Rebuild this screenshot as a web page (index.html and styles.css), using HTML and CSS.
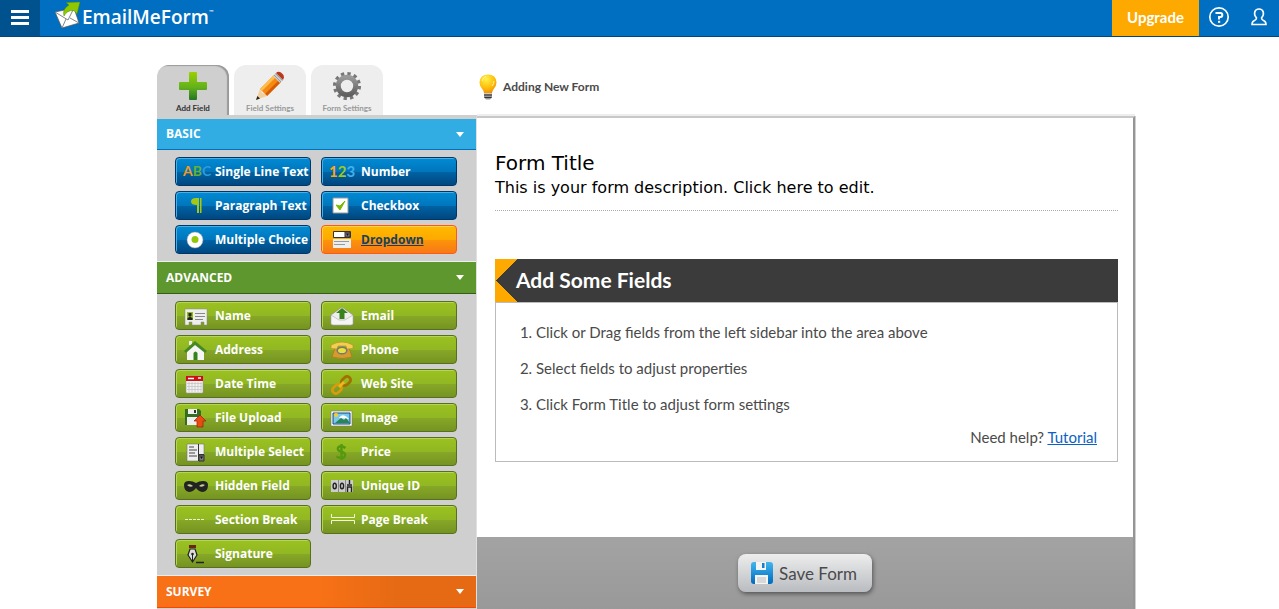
FILE: index.html
```html
<!DOCTYPE html>
<html lang="en">
<head>
    <meta charset="UTF-8">
    <meta name="viewport" content="width=device-width, initial-scale=1.0">
    <title>EmailMeForm - Form Builder</title>
    <link rel="stylesheet" href="styles.css">
</head>
<body>
    <header class="topbar">
        <button class="menu-btn" aria-label="Menu">
            <svg width="18" height="16" viewBox="0 0 18 16" fill="#fff"><path d="M0 0h18v3H0zM0 6h18v3H0zM0 12h18v3H0z"/></svg>
        </button>
        <a class="logo" href="#" aria-label="EmailMeForm">
            <svg width="28" height="30" viewBox="0 0 28 30">
                <path d="M1 12 20 8l5 15L8 28z" fill="#fff" stroke="#555" stroke-width=".7"/>
                <path d="M1 12l13 8L20 8M8 28l4-9M25 23l-9-5" fill="none" stroke="#777" stroke-width=".9"/>
                <path d="M10 16Q8 9 15 5l-3-2.500L26 2l-3 12-3-3.500q-7-.5-10 5.500z" fill="#8dc800" stroke="#4f8700" stroke-width=".5"/>
            </svg>
            <span class="logo-text">EmailMeForm</span><sup class="tm">™</sup>
        </a>
        <a class="upgrade" href="#">Upgrade</a>
        <a class="top-icon" href="#" aria-label="Help">
            <svg width="22" height="22" viewBox="0 0 22 22" fill="none" stroke="#fff">
                <circle cx="11" cy="11" r="9.200" stroke-width="1.700"/>
                <path d="M7.500 7h5q1.800 0 1.800 2t-1.800 2H11v2.500" stroke-width="2"/>
                <path d="M10 15.800h2.200" stroke-width="2"/>
            </svg>
        </a>
        <a class="top-icon" href="#" aria-label="Account">
            <svg width="18" height="20" viewBox="0 0 18 20" fill="none" stroke="#fff" stroke-width="1.600">
                <path d="M6.500 11C3 7 4.500 2 9 2s6 5 2.500 9q0 1.500 2 2.500 2.500 1 2.500 4H2q0-3 2.500-4 2-1 2-2.500z"/>
            </svg>
        </a>
    </header>

    <div class="builder">
        <div class="sidebar">
            <nav class="tabs">
                <button class="tab active">
                    <svg width="30" height="30" viewBox="0 0 30 30">
                        <defs><linearGradient id="plus" x2="0" y2="1"><stop offset="0" stop-color="#9bd000"/><stop offset=".55" stop-color="#62b11c"/><stop offset="1" stop-color="#267522"/></linearGradient></defs>
                        <path d="M12 1h6q1 0 1 1v9h9q1 0 1 1v6q0 1-1 1h-9v9q0 1-1 1h-6q-1 0-1-1v-9H2q-1 0-1-1v-6q0-1 1-1h9V2q0-1 1-1z" fill="url(#plus)"/>
                    </svg>
                    <span>Add Field</span>
                </button>
                <button class="tab">
                    <svg width="30" height="30" viewBox="0 0 30 30">
                        <path d="M5 18 19 4l7 7-14 14z" fill="#f58a12"/>
                        <path d="M5 18 19 4l2 2L7 20z" fill="#ffbd4d"/>
                        <path d="M10 23 24 9l2 2-14 14z" fill="#d65b05"/>
                        <path d="M5 18 1 29l11-4-2-2-3-1z" fill="#f3cf9e"/>
                        <path d="M2.400 25 1 29l4-1.500z" fill="#222"/>
                        <path d="M18 5l3-3 7 7-3 3z" fill="#ccc"/>
                        <path d="M19 4l7 7M20.500 2.500l7 7" stroke="#888" stroke-width=".7"/>
                        <path d="M21 2q2-2 5-.5 3 2 3 5L28 9z" fill="#b8381b"/>
                    </svg>
                    <span>Field Settings</span>
                </button>
                <button class="tab">
                    <svg width="30" height="30" viewBox="0 0 30 30">
                        <defs><linearGradient id="gear" x2="0" y2="1"><stop offset="0" stop-color="#999"/><stop offset="1" stop-color="#606060"/></linearGradient></defs>
                        <g fill="none" stroke="#777">
                            <circle cx="15" cy="15" r="12.300" stroke="#777" stroke-width="3.500" stroke-dasharray="3.300 3.140"/>
                            <circle cx="15" cy="15" r="8.700" stroke="url(#gear)" stroke-width="5"/>
                        </g>
                    </svg>
                    <span>Form Settings</span>
                </button>
            </nav>

            <div class="panel">
                <section class="basic">
                    <button class="section-head">BASIC <i class="arrow"></i></button>
                    <div class="fields">
                        <button class="field"><svg class="icon" viewBox="0 0 26 27"><text class="glyphs" x="0" y="18"><tspan fill="#f29a1f">A</tspan><tspan fill="#63b22f">B</tspan><tspan fill="#2c9bdd">C</tspan></text></svg>Single Line Text</button>
                        <button class="field"><svg class="icon" viewBox="0 0 26 27"><text class="glyphs digits" x="0" y="19"><tspan fill="#fba51d">1</tspan><tspan fill="#9bcb1b">2</tspan><tspan fill="#43b1ea">3</tspan></text></svg>Number</button>
                        <button class="field"><svg class="icon" viewBox="0 0 26 27"><path d="M16 6v15h-2V13q-6 0-6-3.500T13 6zM17 6h1.500v15H17z" fill="#a5c912"/></svg>Paragraph Text</button>
                        <button class="field"><svg class="icon" viewBox="0 0 26 27"><path d="M4 6h15v15H4z" fill="#fff" stroke="#999"/><path d="M7 13l4 5 5-9-5 5z" fill="#7db800" stroke="#7db800"/></svg>Checkbox</button>
                        <button class="field"><svg class="icon" viewBox="0 0 26 27"><circle cx="12" cy="14" r="8" fill="#fff" stroke="#999" stroke-width=".5"/><circle cx="12" cy="13.500" r="3.500" fill="#93c70e"/></svg>Multiple Choice</button>
                        <button class="field hot"><svg class="icon" viewBox="0 0 26 27"><path d="M4 13h18v9H4z" fill="#eee"/><path d="M4.500 5.500h17v6h-17z" fill="#fff" stroke="#333"/><path d="M16 6h5v5h-5z" fill="#777" stroke="#333"/><path d="M17 7.500h3l-1.500 2.500z" fill="#111"/><path d="M5 15.500h15M5 18.500h11" stroke="#999"/></svg>Dropdown</button>
                    </div>
                </section>

                <section class="advanced">
                    <button class="section-head">ADVANCED <i class="arrow"></i></button>
                    <div class="fields">
                        <button class="field"><svg class="icon" viewBox="0 0 26 27"><path d="M2 7h22v16h-3v-3h-3v3h-9v-3H6v3H2z" fill="#eee" stroke="#888" stroke-width=".5"/><path d="M4 10h6v8H4z" fill="#91bd16"/><path d="M5.500 11h3v3h-1v1l2 1v2h-5v-2l2-1v-1h-1z" fill="#222"/><path d="M12 11.500h10M12 14.500h10M12 17.500h8" stroke="#888"/></svg>Name</button>
                        <button class="field"><svg class="icon" viewBox="0 0 26 27"><path d="M2 13 13 5l11 8v9l-2 1H4l-2-1z" fill="#eee" stroke="#888" stroke-width=".6"/><path d="M13 6l6 5h-3.500v6h-5v-6H7z" fill="#39821b"/><path d="M2 13l8 5h6l8-5v9l-2 1H4l-2-1z" fill="#f5f5f5" stroke="#aaa" stroke-width=".6"/></svg>Email</button>
                        <button class="field"><svg class="icon" viewBox="0 0 26 27"><path d="M4 15l9-7 8 7v9H4z" fill="#f5f5f5"/><path d="M6 5h3v4H6z" fill="#eee"/><path d="M1 15 12 5l12 10-2 2-10-8-9 8z" fill="#458924"/><path d="M10.500 24v-7q2-3 4 0v7z" fill="#35811c"/></svg>Address</button>
                        <button class="field"><svg class="icon" viewBox="0 0 26 27"><path d="M6 12h14l3 9q-10 3-20 0z" fill="#d59b31" stroke="#a87218" stroke-width=".6"/><path d="M2 12.500V9q11-6 22 0v3.500l-6 .5-1-3H9l-1 3z" fill="#f4ce52" stroke="#b98b22" stroke-width=".6"/><ellipse cx="13" cy="14.500" rx="5.500" ry="4" fill="#777"/><ellipse cx="13" cy="14.500" rx="4" ry="2.600" fill="#e8e13b"/></svg>Phone</button>
                        <button class="field"><svg class="icon" viewBox="0 0 26 27"><rect x="3" y="6" width="17" height="17" rx="1" fill="#f2f2f2" stroke="#999" stroke-width=".6"/><path d="M3 6h17v5H3z" fill="#ce1010"/><path d="M5 8.500h6M15 8h3" stroke="#fff" stroke-width="1.300"/><path d="M4 13.500h15M4 16.500h15M4 19.500h15M6 12v10M9 12v10M12 12v10M15 12v10M18 12v10" stroke="#bbb" stroke-width=".6"/></svg>Date Time</button>
                        <button class="field"><svg class="icon" viewBox="0 0 26 27"><g fill="none" stroke-width="2.800"><rect x="-5" y="-3.500" width="10" height="7" rx="3.500" transform="translate(8 19) rotate(-43)" stroke="#d99b0c"/><rect x="-5" y="-3.500" width="10" height="7" rx="3.500" transform="translate(17 11) rotate(-43)" stroke="#a37000"/><path d="M10 17l5-5" stroke="#f1b719"/></g></svg>Web Site</button>
                        <button class="field"><svg class="icon" viewBox="0 0 26 27"><path d="M2 5h14l2 2v14H2z" fill="#356e22"/><path d="M5 5h9v5H5zM4 13h12v8H4z" fill="#eee"/><path d="M11 6h2v3h-2z" fill="#333"/><path d="M17 11l6 6h-3v6h-6v-6h-3z" fill="#e94b12" stroke="#981f04" stroke-width=".7"/></svg>File Upload</button>
                        <button class="field"><svg class="icon" viewBox="0 0 26 27"><path d="M2 7h21v15H2z" fill="#fff" stroke="#777" stroke-width=".6"/><path d="M4 9h17v11H4z" fill="#77c9f0" stroke="#174776"/><circle cx="7" cy="11" r="2" fill="#ffcd22"/><path d="M10 14q3-5 8-1l2 2z" fill="#fff"/><path d="M6 19l6-5 3 2 2-2 4 5z" fill="#2c8450"/></svg>Image</button>
                        <button class="field"><svg class="icon" viewBox="0 0 26 27"><path d="M4 6h17v17H4z" fill="#eee" stroke="#777" stroke-width=".6"/><path d="M6 9h5M6 12h8M6 15h6M6 18h8" stroke="#444"/><path d="M15.500 6v17M16 16.500h5" stroke="#333"/><path d="M16 17h5v6h-5z" fill="#777" stroke="#333"/><path d="M17 18.500h3L18.500 21z" fill="#111"/></svg>Multiple Select</button>
                        <button class="field"><svg class="icon" viewBox="0 0 26 27"><path d="M16.500 10q-4-3-7-1-2.500 3 2.500 4.500 6 2 3.500 5.500-3 2.500-8-.5M12.500 6v16" fill="none" stroke="#55990e" stroke-width="2.400"/></svg>Price</button>
                        <button class="field"><svg class="icon" viewBox="0 0 26 27"><path d="M1 13q0-4 5-4 4 0 7 2 3-2 7-2 5 0 5 4 0 6-5 7-4 0-7-4-3 4-7 4-5-1-5-7z" fill="#222"/><path d="M4 13q3-2 6 1-3 2-6-1zM16 14q3-3 6-1-3 3-6 1z" fill="#c2cf96"/></svg>Hidden Field</button>
                        <button class="field"><svg class="icon" viewBox="0 0 26 27"><path d="M2 8h22v12H2z" fill="#ccc"/><path d="M9.500 8v12M16.500 8v12" stroke="#888"/><g fill="none" stroke="#222" stroke-width="1.400"><ellipse cx="5.700" cy="14" rx="1.600" ry="2.800"/><ellipse cx="13" cy="14" rx="1.600" ry="2.800"/><path d="M20.500 8v4M18 13h5M18.500 20v-5h4v5"/></g></svg>Unique ID</button>
                        <button class="field"><svg class="icon" viewBox="0 0 26 27"><path d="M2 13.500h19" stroke="#eef5c8" stroke-dasharray="3 1"/></svg>Section Break</button>
                        <button class="field"><svg class="icon" viewBox="0 0 26 27"><path d="M2.500 8v3.500h23V8M2.500 18v-3.500h23V18" fill="none" stroke="#f3f8dc"/></svg>Page Break</button>
                        <button class="field"><svg class="icon" viewBox="0 0 26 27"><path d="M6 5h7v3H6z" fill="#68280e"/><path d="M7 9h5l2 6-4.500 7L5 15z" fill="#ddd" stroke="#222" stroke-width="1.200"/><path d="M9.500 15v6" stroke="#222"/><circle cx="9.500" cy="14" r="1.300" fill="#222"/><path d="M13 22.500h8" stroke="#222" stroke-width="1.500"/></svg>Signature</button>
                    </div>
                </section>

                <section class="survey">
                    <button class="section-head">SURVEY <i class="arrow"></i></button>
                </section>
            </div>
        </div>

        <main class="main">
            <div class="status">
                <svg width="20" height="28" viewBox="0 0 20 28">
                    <defs><radialGradient id="bulb" cx=".4" cy=".25" r=".8"><stop offset="0" stop-color="#fff34a"/><stop offset=".6" stop-color="#ffbd0a"/><stop offset="1" stop-color="#f08c00"/></radialGradient></defs>
                    <path d="M10 1.500q8 0 8.500 8 0 3-2.500 6-1.500 2-2 4.500H6q-.5-2.500-2-4.500Q1.500 12.500 1.500 9.500 2 1.500 10 1.500z" fill="url(#bulb)"/>
                    <path d="M4 8q1-4 4-4.500M16 8q0 3-2 5" fill="none" stroke="#fff6a8"/>
                    <path d="M6 20.500h8v4l-2 2H8l-2-2z" fill="#999"/>
                    <path d="M6 22h8M6.500 24.500h7" stroke="#333"/>
                </svg>
                <span>Adding New Form</span>
            </div>
            <div class="canvas">
                <div class="form-area">
                    <div class="form-head">
                        <h1>Form Title</h1>
                        <p>This is your form description. Click here to edit.</p>
                    </div>
                    <div class="hint">
                        <h2>Add Some Fields</h2>
                        <div class="hint-body">
                            <ol>
                                <li>Click or Drag fields from the left sidebar into the area above</li>
                                <li>Select fields to adjust properties</li>
                                <li>Click Form Title to adjust form settings</li>
                            </ol>
                            <p class="help">Need help? <a href="#">Tutorial</a></p>
                        </div>
                    </div>
                </div>
                <div class="save-bar">
                    <button class="save">
                        <svg width="24" height="24" viewBox="0 0 24 24">
                            <defs><linearGradient id="disk" x2="0" y2="1"><stop offset="0" stop-color="#42b6ef"/><stop offset="1" stop-color="#0069bd"/></linearGradient></defs>
                            <rect x="1" y="1" width="22" height="22" rx="3" fill="url(#disk)"/>
                            <path d="M6 1h10v8H6zM5 14h13v9H5z" fill="#f4f4f4"/>
                            <path d="M12 2h2.500v5H12z" fill="#1681c8"/>
                            <path d="M7 17h9M7 19h9M7 21h9" stroke="#bbb"/>
                        </svg>
                        Save Form
                    </button>
                </div>
            </div>
        </main>
    </div>
</body>
</html>
```
FILE: styles.css
```css
* {
    box-sizing: border-box;
}

body {
    margin: 0;
    min-height: 100vh;
    display: flex;
    flex-direction: column;
    background: #fff;
    font-family: Lato, "Liberation Sans", sans-serif;
    color: #4a4a4a;
}

button {
    border: none;
    margin: 0;
    padding: 0;
    background: none;
    font-family: inherit;
    cursor: pointer;
}

h1, h2, p, ol {
    margin: 0;
    padding: 0;
}

svg {
    display: block;
    flex: none;
}

/* top bar */
.topbar {
    display: flex;
    height: 37px;
    background: #006fc1;
    border-bottom: 1px solid #00477d;
}

.menu-btn {
    width: 40px;
    display: flex;
    align-items: center;
    justify-content: center;
    background: #00528f;
}

.logo {
    display: flex;
    margin-left: 14px;
    margin-right: auto;
    color: #fff;
    text-decoration: none;
}

.logo-text {
    font: 600 19px/34px "Open Sans", sans-serif;
}

.tm {
    font-size: 6px;
    line-height: 24px;
}

.upgrade {
    width: 87px;
    background: #fda900;
    color: #fff;
    font-size: 15px;
    font-weight: bold;
    line-height: 34px;
    text-align: center;
    text-decoration: none;
}

.top-icon {
    width: 40px;
    height: 34px;
    display: flex;
    align-items: center;
    justify-content: center;
}

/* page */
.builder {
    flex: 1;
    display: flex;
    width: 100%;
    max-width: 991px;
    margin: 0 auto;
    padding: 28px 0 0 13px;
}

.sidebar {
    width: 320px;
    flex: none;
    display: flex;
    flex-direction: column;
}

.tabs {
    display: flex;
    gap: 5px;
    height: 50px;
}

.tab {
    width: 72px;
    padding-top: 6px;
    display: flex;
    flex-direction: column;
    align-items: center;
    gap: 2px;
    border-radius: 12px 12px 0 0;
    background: #eee;
    color: #999;
    font-size: 8px;
    font-weight: bold;
    line-height: 10px;
}

.tab.active {
    background: #cfcfcf;
    color: #333;
    box-shadow: inset -2px 1px 1px #999;
}

.panel {
    flex: 1;
    background: #cfcfcf;
    border-top: 3px solid #cfcfcf;
    border-right: 1px solid #e0e0e0;
}

.section-head {
    width: 100%;
    display: flex;
    justify-content: space-between;
    align-items: center;
    padding: 0 12px 0 9px;
    border-top: 1px solid #eee;
    border-bottom: 1px solid;
    color: #fff;
    font: bold 12px/31px "Open Sans", sans-serif;
}

.basic .section-head {
    line-height: 30px;
    background: #31ade4;
    border-top-color: #cfcfcf;
    border-bottom-color: #0070bd;
}

.advanced .section-head {
    background: #5e972d;
    border-bottom-color: #365c16;
}

.survey .section-head {
    background: linear-gradient(to right, #f87116 50%, #e66a14 75%);
    border-bottom-color: #ff4200;
}

.arrow {
    border: 4px solid transparent;
    border-top: 5px solid #fff;
    border-bottom: 0;
}

.fields {
    display: grid;
    grid-template-columns: 136px 136px;
    gap: 5px 10px;
    padding: 7px 18px;
}

.field {
    height: 29px;
    display: flex;
    align-items: center;
    gap: 6px;
    padding-left: 7px;
    border: 1px solid #56711b;
    border-radius: 4px;
    background: linear-gradient(#9bc220, #91b723 50%, #86a827 51%, #759322);
    box-shadow: inset 1px 1px 0 #b6d35a;
    color: #fff;
    font: bold 12px/27px "Open Sans", sans-serif;
    white-space: nowrap;
}

.basic .field {
    border-color: #00376b;
    background: linear-gradient(#008bd4, #0076bd 50%, #0063a5 51%, #00477f);
    box-shadow: inset 1px 1px 0 #4cafe4;
}

.basic .field.hot {
    border-color: #ff5a12;
    background: linear-gradient(#ffba00, #ffa900 50%, #fd9409 51%, #f77a17);
    box-shadow: inset 1px 1px 0 #ffd04c;
    color: #17405c;
    text-decoration: underline;
}

.icon {
    width: 26px;
    height: 27px;
    overflow: visible;
}

.glyphs {
    font: bold 14px Lato, sans-serif;
}

.digits {
    font-size: 15px;
}

/* form area */
.main {
    flex: 1;
    display: flex;
    flex-direction: column;
}

.status {
    height: 49px;
    padding: 8px 0 0 1px;
    display: flex;
    align-items: flex-start;
    gap: 5px;
    font-size: 12px;
    font-weight: bold;
    line-height: 27px;
}

.canvas {
    flex: 1;
    display: flex;
    flex-direction: column;
    border-top: 2px solid #c8c8c8;
    border-right: 2px solid #959595;
    box-shadow: 0 -2px 0 #eee, 1px 0 0 #d0d0d0;
    margin-top: 2px;
}

.form-area {
    padding: 34px 15px 75px 18px;
}

.form-head {
    border-bottom: 1px dotted #aaa;
    padding-bottom: 10px;
    color: #000;
    font-family: "DejaVu Sans", Verdana, sans-serif;
}

.form-head h1 {
    font-size: 20px;
    font-weight: normal;
    line-height: 22px;
}

.form-head p {
    padding-top: 2px;
    font-size: 16px;
    line-height: 24px;
}

.hint {
    margin-top: 48px;
}

.hint h2 {
    padding-left: 21px;
    color: #fff;
    font-size: 21px;
    font-weight: bold;
    line-height: 42px;
    height: 43px;
    background:
        linear-gradient(to bottom right, #fda900 50%, transparent 51%) 0 0 / 22px 22px no-repeat,
        linear-gradient(to top right, #fda900 50%, transparent 51%) 0 100% / 22px 22px no-repeat,
        #3b3b3b;
}

.hint-body {
    padding: 11px 20px 9px 40px;
    border: 1px solid #bbb;
    font-size: 15px;
}

.hint-body ol {
    line-height: 36px;
}

.help {
    line-height: 30px;
    text-align: right;
}

.help a {
    color: #0b62c4;
}

.save-bar {
    flex: 1;
    display: flex;
    justify-content: center;
    align-items: flex-start;
    padding: 17px 0 16px;
    background: linear-gradient(#a3a3a3, #999);
}

.save {
    height: 38px;
    display: flex;
    align-items: center;
    gap: 5px;
    padding: 0 15px 0 12px;
    border-radius: 8px;
    background: linear-gradient(#ededed, #b9bcc0);
    box-shadow: 1px 2px 4px #555;
    color: #4a4a4a;
    font-size: 17px;
}
```
